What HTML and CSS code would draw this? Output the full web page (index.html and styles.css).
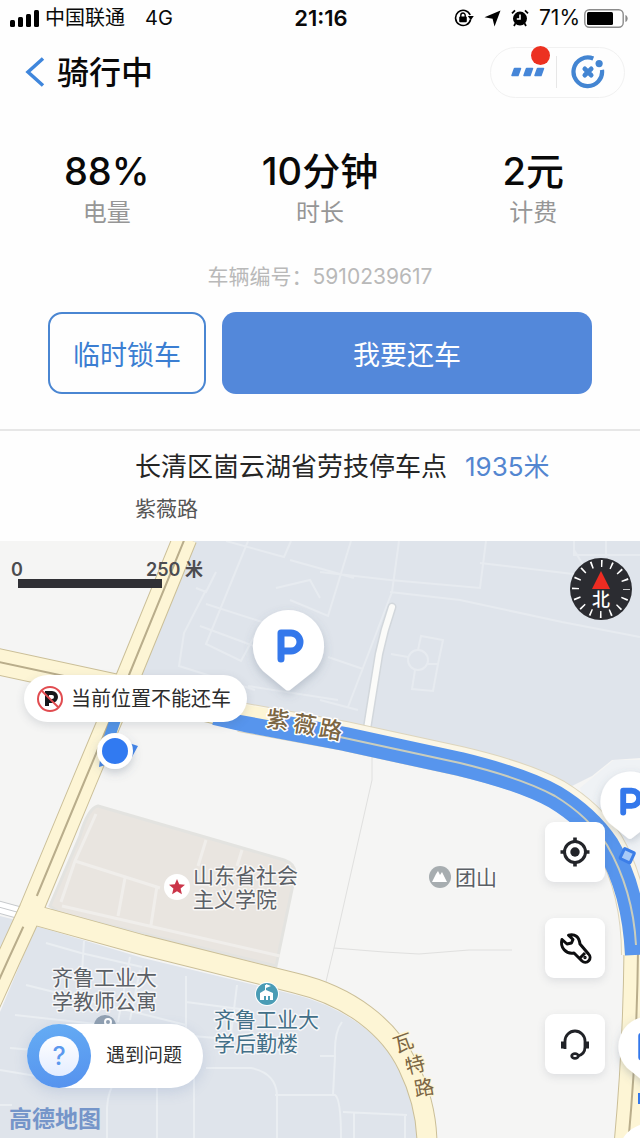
FILE: index.html
```html
<!DOCTYPE html>
<html lang="zh-CN">
<head>
<meta charset="utf-8">
<meta name="viewport" content="width=device-width, initial-scale=1">
<title>骑行中</title>
<link rel="stylesheet" href="styles.css">
</head>
<body>
<div class="app">
  <div class="status">
    <div class="status-left">
      <svg width="29" height="17" viewBox="0 0 29 17" aria-hidden="true"><rect x="0" y="10" width="5" height="7" rx="1.5"/><rect x="8" y="7" width="5" height="10" rx="1.5"/><rect x="16" y="4" width="5" height="13" rx="1.5"/><rect x="24" y="0" width="5" height="17" rx="1.5"/></svg>
      <span>中国联通</span>
      <span class="network">4G</span>
    </div>
    <span class="clock">21:16</span>
    <div class="status-right">
      <svg width="20" height="18" viewBox="0 0 20 18" aria-hidden="true"><path d="M16.600 10.500A7.600 7.600 0 1 1 16.200 6" fill="none" stroke="#000" stroke-width="1.600"/><path d="M13.800 7h6l-3 4.200z"/><rect x="5.200" y="7.600" width="7.600" height="5.600" rx="1"/><path d="M6.800 8V6.200a2.200 2.200 0 0 1 4.400 0V8" fill="none" stroke="#000" stroke-width="1.400"/></svg>
      <svg width="17" height="17" viewBox="0 0 17 17" aria-hidden="true"><path d="M16.500.5 10.500 16.500 8.600 8.800.5 7.200z"/></svg>
      <svg width="18" height="18" viewBox="0 0 18 18" aria-hidden="true"><circle cx="9" cy="9.600" r="7"/><path d="M1 4.400 4 1.400M17 4.400 14 1.400M4.400 14.400 3 17M13.600 14.400 15 17" stroke="#000" stroke-width="1.800"/><path d="M9 5.400v4.600H5.800" fill="none" stroke="#fff" stroke-width="1.600"/></svg>
      <span class="percent">71%</span>
      <svg width="44" height="19" viewBox="0 0 44 19" aria-hidden="true"><rect x=".8" y=".8" width="38.400" height="17.400" rx="4.500" fill="#fff" stroke="#8b8b8b" stroke-width="1.400"/><rect x="3" y="3" width="26" height="13" rx="1.500"/><path d="M41.400 6c3 1 3 6 0 7z" fill="#8b8b8b"/></svg>
    </div>
  </div>

  <header class="nav">
    <button class="back" type="button" aria-label="返回"><svg width="20" height="30" viewBox="0 0 20 30"><path d="M18 1.500 3 15l15 13.500" fill="none" stroke="#3f86dc" stroke-width="3.500"/></svg></button>
    <h1 class="title">骑行中</h1>
    <div class="capsule">
      <button class="capsule-btn capsule-more" type="button" aria-label="更多">
        <svg width="34" height="10" viewBox="0 0 34 10" fill="#4686d8"><path id="dash" d="M3.500 1.500h6L7 8.500H1z" stroke="#4686d8" stroke-width="1.500" stroke-linejoin="round"/><use href="#dash" x="12"/><use href="#dash" x="23"/></svg>
        <span class="dot"></span>
      </button>
      <button class="capsule-btn capsule-close" type="button" aria-label="关闭">
        <svg width="36" height="36" viewBox="0 0 34 34" fill="none" stroke="#4385d2" stroke-linecap="round"><path d="M22 4.300A13.500 13.500 0 1 0 30.200 15" stroke-width="4" stroke-linecap="butt"/><path d="m14 14 6 6m0-6-6 6" stroke-width="4.500"/><circle cx="27.500" cy="9" r="3.400" fill="#4385d2" stroke="none"/></svg>
      </button>
    </div>
  </header>

  <section class="stats">
    <div class="stat"><strong class="stat-value">88%</strong><span class="stat-label">电量</span></div>
    <div class="stat"><strong class="stat-value">10分钟</strong><span class="stat-label">时长</span></div>
    <div class="stat"><strong class="stat-value">2元</strong><span class="stat-label">计费</span></div>
  </section>
  <p class="bike-code">车辆编号：5910239617</p>
  <div class="actions">
    <button class="btn btn-outline" type="button">临时锁车</button>
    <button class="btn btn-primary" type="button">我要还车</button>
  </div>

  <section class="place">
    <div class="place-main"><span>长清区崮云湖省劳技停车点</span><span class="distance">1935米</span></div>
    <div class="place-road">紫薇路</div>
  </section>

  <main class="map">
    <svg class="map-canvas" viewBox="0 541 640 597" preserveAspectRatio="xMinYMin slice" role="img" aria-label="地图">
      <defs>
        <filter id="shade" x="-30%" y="-30%" width="160%" height="170%"><feDropShadow dx="0" dy="4" stdDeviation="5" flood-color="#53627a" flood-opacity=".28"/></filter>
        <path id="west" d="M-10 660 120 688 250 719"/>
        <path id="avenue" d="M240 717 345 736 400 748 460 761Q524 776 557 794Q590 814 609 843Q636 890 636 955"/>
        <path id="avenue-south" d="M638 950Q637 1050 628 1145"/>
        <path id="diagonal" d="M185 538 129 675 85 780 31 910 8 960-20 1022"/>
        <path id="ring" d="M20 911 143 945 295 983C350 996 390 1028 408 1066Q427 1105 427 1145"/>
      </defs>
      <rect y="541" width="640" height="597" fill="#f5f5f4"/>
      <path d="M190 541H640V758L612 760 592 776 560 792 480 760 345 725 130 690z" fill="#dfe4eb"/>
      <path d="M580 788 614 760H640V900L600 840z" fill="#eff2f5"/>
      <g fill="none" stroke="#e7ebf0" stroke-width="2">
        <path d="M226 541l58 16 7-16M248 541l-42 103 35 17 14-26M206 604l72 23M206 590l-22 43-5 33 76 24M196 588l10 4 10-20M200 626l54 20M276 588l34-8 10 18M290 560l64 18M351 541l-23 75-38-16M320 572l70 8 90 8 6-47M399 541l-7 51M480 563l110 13-16-26V541M390 592l70 8 102 22 78 15M392 592l-44 115M248 686l90 14M320 700l38 10M328 657l35 12M574 541v14h66M606 541v16"/>
        <circle cx="418" cy="660" r="10"/><path d="M391 654l17 3M418 650l3-14 22 4-5 24h-10M415 670l-3 19 21 2 5-27"/>
      </g>
      <path d="M392 607Q384 630 379 654L366 735" fill="none" stroke="#d2d7dc" stroke-width="9" stroke-linecap="round"/>
      <path d="M392 607Q384 630 379 654L366 735" fill="none" stroke="#fbfbf9" stroke-width="6" stroke-linecap="round"/>
      <path d="M372 750v30L334 948l-10 42M334 948l50 4 35 2 50-4h43" fill="none" stroke="#e0e0df" stroke-width="1"/>
      <path d="M98 806 284 860Q296 864 295 875L276 966 62 914 50 906 80 836Q88 808 98 806z" fill="#e9e5e0" stroke="#e3e3e0" stroke-width="3"/>
      <path d="M75 861 160 888M206 840l-8 26M242 850l-5 16M125 878l-7 38M157 886l-6 39M62 906l218 50M96 814l-21 47-14 41" fill="none" stroke="#f0eeeb" stroke-width="3"/>
      <path d="M0 916 20 921 0 965zM36 926 143 958 300 996C350 1010 386 1040 403 1072Q418 1104 418 1138H0V1012z" fill="#dfe4eb"/>
      <path d="M46 943l35 10 61 14M84 941l-4 62M130 957l-12 65M26 985l160 40M15 1015l90 10M10 1048l60 5M0 1070l60 10M186 976v88M140 970l-10 50M237 985l-8 65M186 1002l54 7M180 1035l60 5M206 1068h45q25 5 26 27v43M107 1138v-30q1-18 8-25M157 1138v-52M194 1138v-70M275 1095h60q6 4 6 43M342 1022q-8 10-7 35l-2 38M320 1056h14M343 1112l64 3M405 1114v24M354 1112v26M0 1105h12" fill="none" stroke="#eaeef2" stroke-width="2"/>
      <path d="M-5 906 35 917" stroke="#c6c9cc" stroke-width="13"/><path d="M-5 906 35 917" stroke="#fff" stroke-width="11"/><path d="M-5 906 35 917" stroke="#c6c9cc"/>
      <g fill="none">
        <use href="#west" stroke="#cbbf98" stroke-width="27"/><use href="#avenue" stroke="#ddd5bd" stroke-width="30"/><use href="#avenue-south" stroke="#cbbf98" stroke-width="29"/><use href="#diagonal" stroke="#cbbf98" stroke-width="25"/><use href="#ring" stroke="#cbbf98" stroke-width="21"/>
        <use href="#avenue" stroke="#fbf6e6" stroke-width="28"/><use href="#west" stroke="#fdf5d5" stroke-width="25"/><use href="#avenue-south" stroke="#fdf5d5" stroke-width="27"/><use href="#diagonal" stroke="#fdf5d5" stroke-width="23"/>
        <use href="#west" stroke="#b9ad8b" stroke-width="2"/><use href="#avenue-south" stroke="#b9ad8b" stroke-width="2"/><use href="#diagonal" stroke="#b9ad8b" stroke-width="2"/>
        <use href="#ring" stroke="#fdf5d5" stroke-width="19"/>
        <path d="M37 896 24 927" stroke="#fdf5d5" stroke-width="15"/>
        <path d="M118 712 105 750" stroke="#5395e9" stroke-width="11"/>
        <path d="M215 713 250 721 345 739 400 751 460 764Q522 779 555 797Q588 817 607 845Q634 890 637 955" stroke="#5795ed" stroke-width="24" stroke-linejoin="round"/>
        <path d="M340 737 400 750 460 763Q522 778 555 796Q588 816 607 845Q633 890 636 945" stroke="#c9cdbd" stroke-width="2"/>
        <path d="M200 702 282 717" stroke="#fdf5d5" stroke-width="11"/>
      </g>
      <rect x="622" y="850" width="11" height="11" rx="1" transform="rotate(25 627 855)" fill="#a8caf7" stroke="#3c7ee8" stroke-width="3"/>

      <g class="road-name">
        <text x="278" y="728" transform="rotate(8 278 719)">紫</text><text x="305" y="733" transform="rotate(9 305 724)">薇</text><text x="331" y="738" transform="rotate(10 331 729)">路</text>
      </g>
      <g class="road-name road-small">
        <text x="403" y="1050" transform="rotate(-20 403 1042)">瓦</text><text x="415" y="1072" transform="rotate(-14 415 1064)">特</text><text x="424" y="1095" transform="rotate(-10 424 1087)">路</text>
      </g>
      <g class="poi">
        <text x="193" y="883">山东省社会</text><text x="193" y="907">主义学院</text>
        <text x="455" y="885">团山</text>
        <text x="52" y="985">齐鲁工业大</text><text x="52" y="1009">学教师公寓</text>
        <g class="poi-teal"><text x="214" y="1027">齐鲁工业大</text><text x="214" y="1051">学后勤楼</text></g>
      </g>
      <circle cx="177" cy="887" r="13" fill="#fff"/><path d="m177 879 2.200 5.300 5.800.5-4.400 3.800 1.300 5.700-4.900-3.100-4.900 3.100 1.300-5.700-4.400-3.800 5.800-.5z" fill="#cb3549"/>
      <circle cx="440" cy="877" r="11" fill="#a7adb0"/><path d="m432 882 4-8 2-3 2 4 2-3 5 10z" fill="#fff"/>
      <circle cx="267" cy="994" r="12" fill="#fff"/><circle cx="267" cy="994" r="11" fill="#4a9cb5"/><path d="M260 1000v-7l5-3v-5h1v-1l5 2-5 2v2l7 3v7h-3v-4h-2v4h-2v-4h-2v4z" fill="#fff"/>
      <circle cx="105" cy="1026" r="11" fill="#91a0b1"/><circle cx="108" cy="1022" r="3" fill="none" stroke="#fff" stroke-width="2"/>
      <text class="map-brand" x="9" y="1127">高德地图</text>

      <g filter="url(#shade)"><path id="pin" d="M288 610a36 36 0 0 1 26 61l-24 19q-2 1-4 0l-23-19A36 36 0 0 1 288 610z" fill="#fff"/></g>
      <path id="pin-letter" d="M281 659V633h10a9 9 0 0 1 0 18h-10" fill="none" stroke="#3478eb" stroke-width="7" stroke-linecap="round" stroke-linejoin="round"/>
      <g transform="translate(388 259) scale(.84)"><use href="#pin" filter="url(#shade)"/><use href="#pin-letter" x="-1"/></g>
      <g transform="translate(406 504) scale(.84)"><use href="#pin" filter="url(#shade)"/><use href="#pin-letter" x="-1"/></g>
      <circle cx="648" cy="1153" r="29" fill="#fff"/><rect x="638" y="1093" width="8" height="11" fill="#3478eb"/>
      <path d="M101 753 99 767 115 762zM126 742 138 746 132 757z" fill="#4285ea"/>
      <circle cx="115" cy="751" r="18" fill="#fff" filter="url(#shade)"/><circle cx="115" cy="751" r="13" fill="#317af1"/>

      <g class="scale"><text x="17" y="576">0</text><text x="146" y="576">250 米</text></g><rect x="18" y="579" width="144" height="9" fill="#303035"/>
    </svg>

    <button class="compass" type="button" aria-label="指北">
      <svg width="62" height="62" viewBox="0 0 62 62"><circle cx="31" cy="31" r="31" fill="#2b2c31"/><circle cx="31" cy="31" r="25.500" fill="none" stroke="#fff" stroke-width="7" stroke-dasharray="1.600 8.414" stroke-dashoffset=".8"/><path d="m31 13 9 18H22z" fill="#ed2c22"/></svg>
      <span class="compass-label">北</span>
    </button>

    <div class="toast" role="status">
      <svg width="28" height="28" viewBox="0 0 28 28" fill="none" aria-hidden="true"><path d="M11 21V8h5a4 4 0 0 1 0 8h-5" stroke="#15171b" stroke-width="4"/><circle cx="14" cy="14" r="12" stroke="#e14c50" stroke-width="2"/><path d="m6 6 16 16" stroke="#e14c50" stroke-width="2"/></svg>
      <span>当前位置不能还车</span>
    </div>

    <div class="tools">
      <button class="tool" type="button" aria-label="定位"><svg width="32" height="32" viewBox="0 0 32 32"><circle cx="16" cy="16" r="10.500" fill="none" stroke="#222429" stroke-width="3"/><circle cx="16" cy="16" r="4.700" fill="#222429"/><path d="M16 1.500V6M16 26v4.500M1.500 16H6M26 16h4.500" stroke="#222429" stroke-width="3.600"/></svg></button>
      <button class="tool" type="button" aria-label="报修"><svg width="34" height="34" viewBox="0 0 34 34" fill="none" stroke="#0d0e10" stroke-width="3" stroke-linejoin="round"><path d="M10.500 4.200Q20.500 2 22 13L30.500 23a4.500 4.500 0 0 1-6.500 7L16 22C8 23.500 1.800 16.500 4 8.500L9 13 13.500 12 15 8.500z"/><path d="m22 27 5-5"/><circle cx="27" cy="26.500" r=".7" stroke-width="2"/></svg></button>
      <button class="tool" type="button" aria-label="客服"><svg width="32" height="32" viewBox="0 0 32 32" fill="none" stroke="#202227" stroke-width="2.800"><path d="M6 21V13a10 10 0 0 1 20 0v6Q26 26 19 28"/><path d="M4.500 13.500v7M27.500 13.500v7" stroke-width="5"/><ellipse cx="16" cy="28" rx="3.300" ry="2.300"/></svg></button>
    </div>

    <button class="help" type="button"><span class="help-ring"><span class="help-mark">?</span></span><span>遇到问题</span></button>
  </main>
</div>
</body>
</html>
```
FILE: styles.css
```css
* { box-sizing: border-box; }
body { margin: 0; background: #fefefe; color: #090909; font-family: Inter, "Noto Sans CJK SC", sans-serif; }
button { margin: 0; padding: 0; border: 0; background: none; color: inherit; font: inherit; }
svg { display: block; flex: none; }
.app { display: flex; flex-direction: column; min-height: 100vh; }

.status { display: grid; grid-template-columns: 1fr auto 1fr; align-items: center; height: 36px; padding: 0 12px 0 10px; font-size: 20px; line-height: 24px; }
.status-left, .status-right { display: flex; align-items: center; }
.status-left { gap: 6px; }
.network { margin-left: 14px; }
.clock { padding-left: 4px; font-size: 22px; font-weight: 600; }
.status-right { justify-content: flex-end; gap: 10px; }
.percent { margin-right: -6px; font-size: 21px; }

.nav { display: flex; align-items: center; height: 72px; padding: 0 15px 0 25px; }
.title { margin: 0 auto 0 12px; padding-top: 2px; font-size: 32px; line-height: 40px; font-weight: 500; }
.capsule { display: flex; align-items: center; width: 135px; height: 51px; border: 1px solid #f1f1f1; border-radius: 26px; }
.capsule-btn { position: relative; display: flex; align-items: center; justify-content: center; height: 32px; }
.capsule-more { width: 65px; padding-left: 8px; }
.capsule-close { flex: 1; padding-right: 5px; border-left: 1px solid #e7e7e7; }
.dot { position: absolute; right: 6px; top: -10px; width: 19px; height: 19px; border-radius: 50%; background: #ec3121; }

.stats { display: grid; grid-template-columns: repeat(3, 1fr); padding-top: 39px; text-align: center; }
.stat { display: flex; flex-direction: column; }
.stat-value { font-size: 38px; line-height: 48px; font-weight: 500; }
.stat-label { color: #969696; font-size: 24px; line-height: 36px; }
.bike-code { margin: 30px 0 0; color: #b9b9b9; font-size: 21px; line-height: 32px; text-align: center; }
.actions { display: grid; grid-template-columns: 158fr 370fr; gap: 16px; padding: 19px 48px 35px; border-bottom: 2px solid #e7e7e7; }
.btn { height: 82px; padding-top: 6px; border-radius: 14px; font-size: 27px; line-height: 36px; font-weight: 400; }
.btn-outline { border: 2px solid #4a86d2; color: #3b7ed2; }
.btn-primary { background: #5388da; color: #fff; }

.place { padding: 16px 24px 15px 135px; }
.place-main { display: flex; gap: 18px; color: #252525; font-size: 26px; line-height: 40px; }
.distance { color: #5386d0; }
.place-road { margin-top: 5px; color: #555; font-size: 21px; line-height: 34px; }

.map { position: relative; flex: 1; min-height: 580px; overflow: hidden; }
.map-canvas { position: absolute; inset: 0; width: 100%; height: 100%; }
.road-name { fill: #7c6644; font-size: 23px; font-weight: 500; text-anchor: middle; stroke: #fff; stroke-width: 3px; stroke-linejoin: round; paint-order: stroke; }
.road-small { font-size: 20px; font-weight: 400; stroke: #fdf5d5; }
.poi { fill: #5b6066; font-size: 21px; stroke: #fff; stroke-width: 3px; stroke-opacity: .7; stroke-linejoin: round; paint-order: stroke; }
.poi-teal { fill: #426f87; }
.map-brand { fill: #7595c9; font-size: 23px; font-weight: 700; }
.scale { fill: #4c4c50; font-size: 18px; font-weight: 600; }
.scale text:first-child { text-anchor: middle; }

.compass { position: absolute; top: 17px; right: 8px; }
.compass-label { position: absolute; left: 0; right: 0; top: 32px; color: #fff; font-size: 18px; line-height: 20px; font-weight: 500; text-align: center; }
.toast { position: absolute; top: 134px; left: 24px; display: flex; align-items: center; gap: 7px; height: 47px; padding: 0 16px 0 12px; border-radius: 24px; background: #fff; box-shadow: 0 3px 10px rgba(70, 80, 100, .16); color: #2c2c2c; font-size: 20px; line-height: 28px; }
.tools { position: absolute; top: 281px; right: 35px; display: grid; gap: 36px; }
.tool { display: grid; place-items: center; width: 60px; height: 60px; border-radius: 9px; background: #fff; box-shadow: 0 3px 9px rgba(70, 80, 100, .13); }
.help { position: absolute; left: 27px; bottom: 50px; display: flex; align-items: center; gap: 15px; height: 64px; padding-right: 21px; border-radius: 32px; background: #fff; box-shadow: 0 4px 14px rgba(80, 110, 170, .18); color: #303030; font-size: 19px; line-height: 28px; }
.help-ring { display: grid; place-items: center; width: 64px; height: 64px; border-radius: 50%; background: linear-gradient(170deg, #65adf4, #5591ee); }
.help-mark { display: grid; place-items: center; width: 40px; height: 40px; border-radius: 50%; background: linear-gradient(#fff, #e4edff); color: #5c99ee; font-size: 25px; line-height: 28px; font-weight: 500; }
```
